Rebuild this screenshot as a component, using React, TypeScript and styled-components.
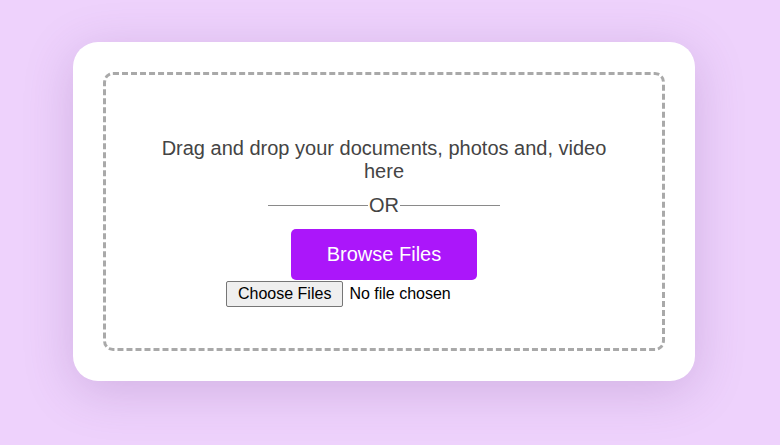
import React from 'react'
import styled, { createGlobalStyle } from 'styled-components'

const GlobalStyle = createGlobalStyle`
  * {
    box-sizing: border-box;
  }

  body {
    margin: 0;
    background-color: #eed2fc;
    font-family: 'Liberation Sans', Arial, sans-serif;
  }
`

const Page = styled.main`
  width: 780px;
  height: 445px;
  padding: 42px 0 0 73px;
`

const Card = styled.section`
  width: 622px;
  height: 339px;
  padding: 30px;
  background-color: #ffffff;
  border-radius: 25px;
  box-shadow: 0 10px 50px rgba(110, 60, 140, 0.22);
`

const DropArea = styled.div`
  height: 100%;
  border: 3px dashed #a9a9a9;
  border-radius: 10px;
  padding: 62px 40px 0;
  display: flex;
  flex-direction: column;
  align-items: center;
  text-align: center;
`

const Message = styled.p`
  margin: 0;
  font-size: 20px;
  line-height: 23px;
  color: #444444;
`

const Divider = styled.div`
  margin-top: 11px;
  display: flex;
  align-items: center;
  gap: 1px;
  font-size: 20px;
  line-height: 23px;
  color: #444444;

  &::before,
  &::after {
    content: '';
    width: 100px;
    height: 1px;
    background-color: #8a8a8a;
  }
`

const BrowseButton = styled.button`
  margin-top: 12px;
  padding: 14px 36px;
  border: none;
  border-radius: 5px;
  background-color: #ab16fa;
  color: #ffffff;
  font-family: 'Liberation Sans', Arial, sans-serif;
  font-size: 20px;
  line-height: 23px;
  cursor: pointer;
`

const FileInput = styled.input`
  width: 316px;
  margin-top: 1px;
  font-family: 'Liberation Sans', Arial, sans-serif;
  font-size: 16px;
  color: #000000;

  &::file-selector-button {
    margin-right: 6px;
    padding: 3px 11px;
    border: 1px solid #767676;
    border-radius: 2px;
    background-color: #efefef;
    font: inherit;
    color: #000000;
  }
`

const App: React.FC = () => {
  return (
    <Page>
      <GlobalStyle />
      <Card>
        <DropArea>
          <Message>Drag and drop your documents, photos and, video here</Message>
          <Divider>OR</Divider>
          <BrowseButton>Browse Files</BrowseButton>
          <FileInput type="file" multiple />
        </DropArea>
      </Card>
    </Page>
  )
}

export default App
